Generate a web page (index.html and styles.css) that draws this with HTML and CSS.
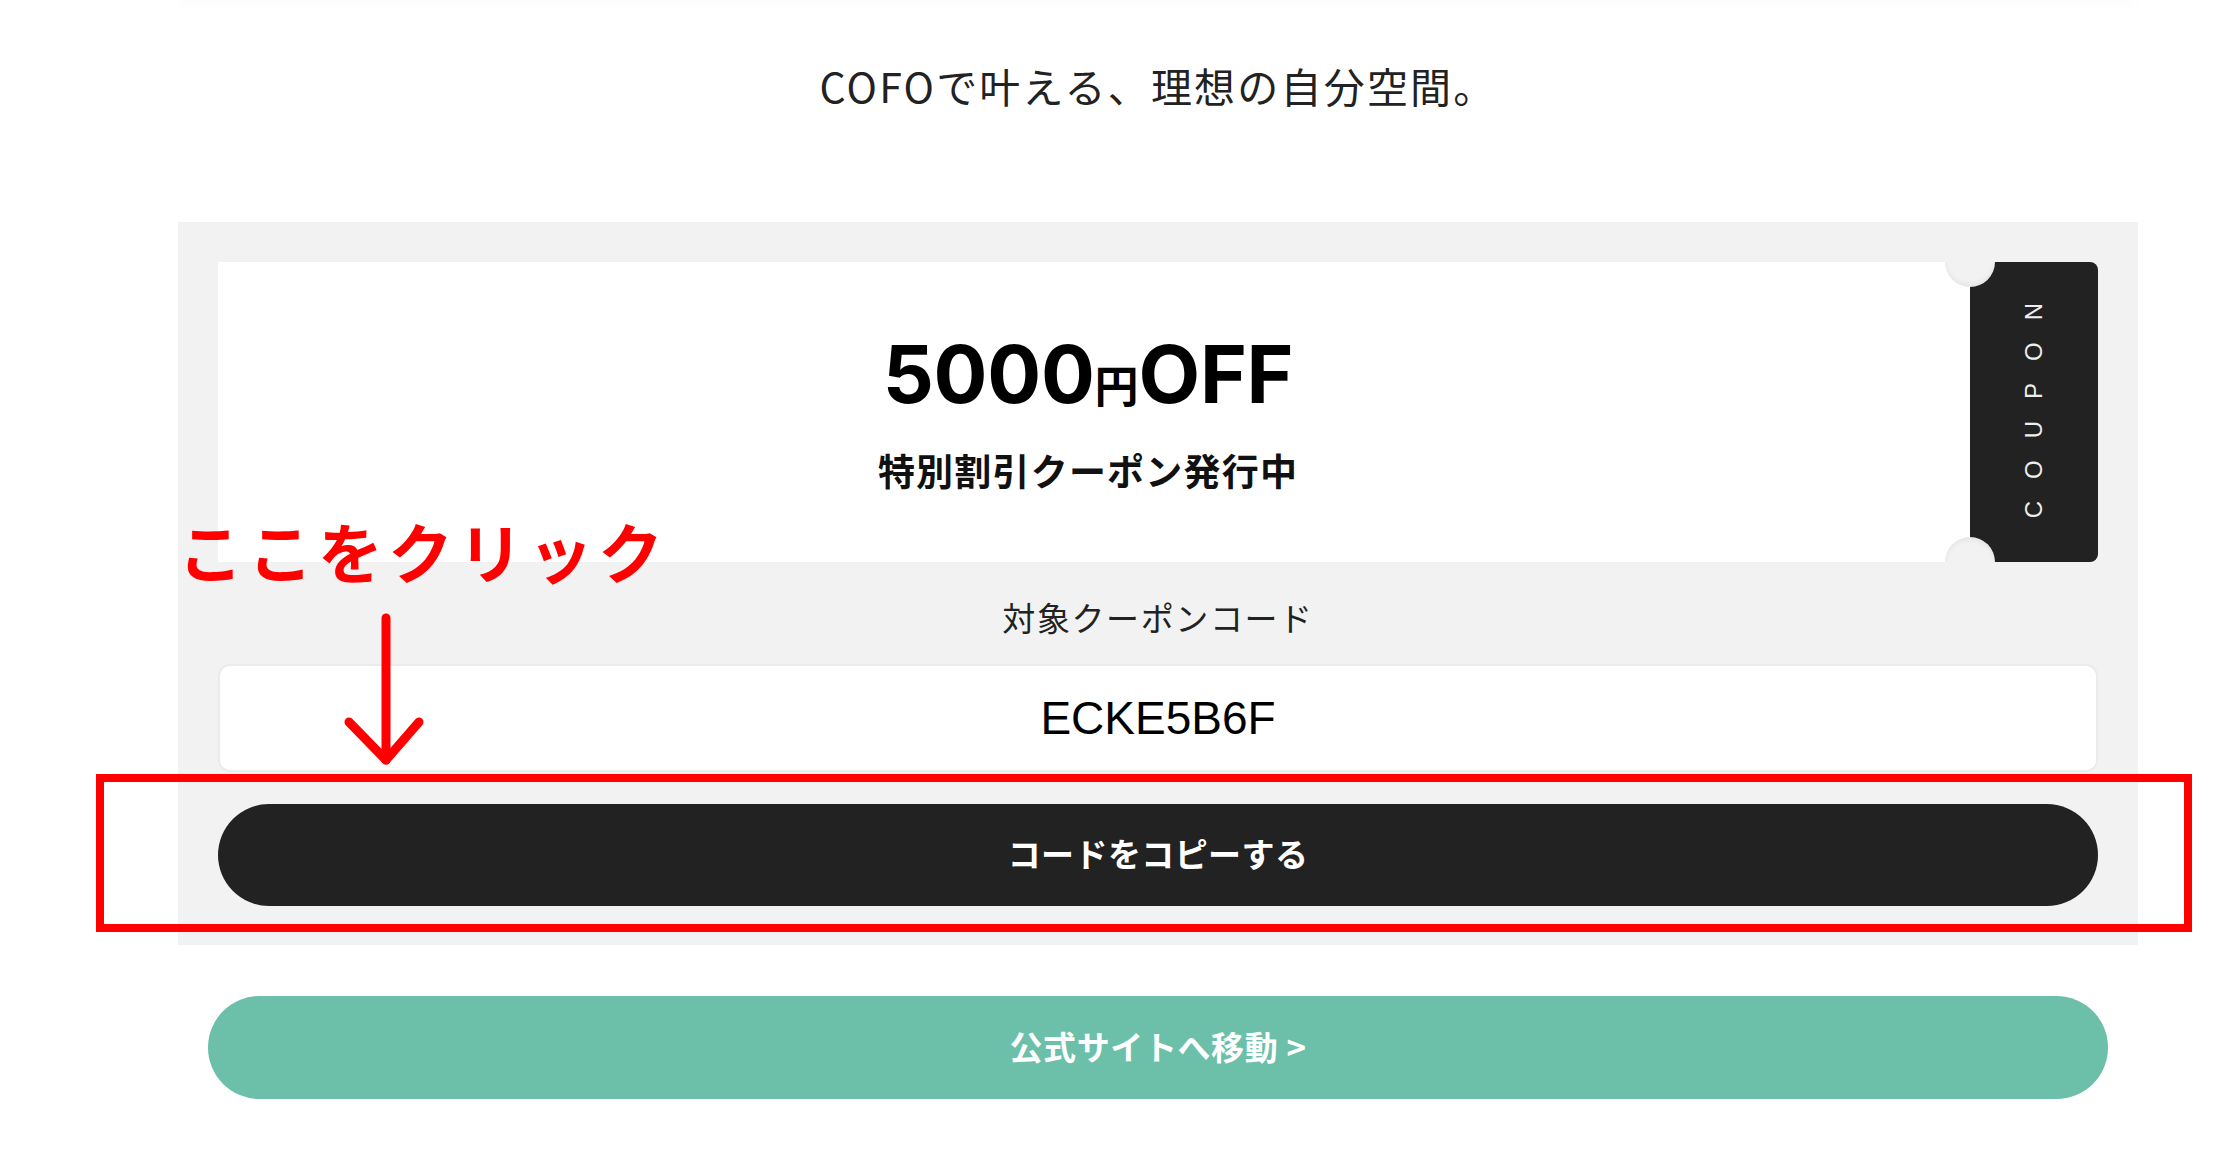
FILE: index.html
```html
<!DOCTYPE html>
<html lang="ja">
<head>
<meta charset="utf-8">
<title>COFO クーポン</title>
<link rel="stylesheet" href="styles.css">
</head>
<body>
  <div class="page">
    <div class="prev-card"></div>
    <h2 class="lead">COFOで叶える、理想の自分空間。</h2>
    <section class="coupon-box">
      <div class="ticket">
        <div class="ticket-main">
          <p class="amount">5000<span class="yen">円</span>OFF</p>
          <p class="sub">特別割引クーポン発行中</p>
        </div>
        <div class="ticket-stub"><span class="stub-text">COUPON</span></div>
        <span class="notch notch-top"></span>
        <span class="notch notch-bottom"></span>
      </div>
      <p class="code-label">対象クーポンコード</p>
      <div class="code-box">ECKE5B6F</div>
      <button class="copy-btn" type="button">コードをコピーする</button>
    </section>
    <a class="site-btn" href="#">公式サイトへ移動 &gt;</a>
  </div>

  <div class="annot-text">ここをクリック</div>
  <svg class="annot-arrow" width="90" height="160" viewBox="0 0 90 160" fill="none" stroke="#ff0000" stroke-width="9" stroke-linecap="round" stroke-linejoin="round">
    <path d="M46 8 L46 150"/>
    <path d="M9 112 L46 150 L79 112"/>
  </svg>
  <div class="annot-frame"></div>
</body>
</html>
```

FILE: styles.css
```css
html, body {
  margin: 0;
  padding: 0;
  background: #ffffff;
}

body {
  font-family: "Noto Sans CJK JP", "Noto Sans", sans-serif;
  color: #222222;
  position: relative;
  min-height: 1166px;
  overflow: hidden;
}

.page {
  margin-left: 178px;
  width: 1960px;
}

.prev-card {
  height: 2px;
  margin-top: -2px;
  background: #fafafa;
  box-shadow: 0 3px 10px rgba(0, 0, 0, 0.05);
}

.lead {
  margin: 55px 0 107px;
  font-size: 41px;
  line-height: 60px;
  font-weight: 400;
  text-align: center;
  color: #222222;
  letter-spacing: 2.2px;
}

.coupon-box {
  background: #f2f2f2;
  padding: 40px 40px 39px;
}

.ticket {
  position: relative;
  display: flex;
  height: 300px;
  overflow: hidden;
}

.ticket-main {
  flex: 1;
  background: #ffffff;
  display: flex;
  flex-direction: column;
  align-items: center;
  justify-content: center;
  padding-top: 4px;
  padding-right: 12px;
}

.amount {
  margin: 0;
  font-family: Inter, "Liberation Sans", sans-serif;
  font-weight: 700;
  font-size: 80px;
  line-height: 80px;
  color: #000000;
  letter-spacing: -0.3px;
}

.yen {
  font-family: "Noto Sans CJK JP", sans-serif;
  font-size: 44px;
  font-weight: 700;
  letter-spacing: 0;
}

.sub {
  margin: 22px 0 0;
  font-size: 37px;
  line-height: 48px;
  font-weight: 700;
  color: #111111;
  letter-spacing: 1.2px;
}

.ticket-stub {
  width: 128px;
  background: #222222;
  border-radius: 0 8px 8px 0;
  display: flex;
  align-items: center;
  justify-content: center;
  padding-bottom: 24px;
  box-sizing: border-box;
}

.stub-text {
  writing-mode: vertical-rl;
  transform: rotate(180deg);
  font-family: "Liberation Sans", Arial, sans-serif;
  font-size: 24px;
  letter-spacing: 22px;
  color: #eeeeee;
}

.notch {
  position: absolute;
  left: 1727px;
  width: 50px;
  height: 50px;
  border-radius: 50%;
  background: #f2f2f2;
}

.notch-top {
  top: -25px;
  box-shadow: inset 0 -3px 5px rgba(0, 0, 0, 0.05);
}

.notch-bottom {
  bottom: -25px;
  box-shadow: inset 0 3px 5px rgba(0, 0, 0, 0.05);
}

.code-label {
  margin: 31px 0 23px;
  font-size: 33px;
  line-height: 48px;
  font-weight: 400;
  text-align: center;
  color: #222222;
  letter-spacing: 1.6px;
}

.code-box {
  height: 108px;
  box-sizing: border-box;
  background: #ffffff;
  border: 2px solid #ebebeb;
  border-radius: 12px;
  display: flex;
  align-items: center;
  justify-content: center;
  font-family: "Liberation Sans", Arial, sans-serif;
  font-size: 46px;
  color: #000000;
}

.copy-btn {
  display: flex;
  align-items: center;
  justify-content: center;
  width: 100%;
  height: 102px;
  margin-top: 32px;
  border: none;
  border-radius: 51px;
  background: #222222;
  color: #ffffff;
  font-family: "Noto Sans CJK JP", sans-serif;
  font-size: 33px;
  font-weight: 700;
  padding: 0 0 5px;
  letter-spacing: 0.4px;
}

.site-btn {
  display: flex;
  align-items: center;
  justify-content: center;
  height: 103px;
  box-sizing: border-box;
  padding-bottom: 4px;
  margin: 51px 30px 0;
  border-radius: 52px;
  background: #6cbfa8;
  color: #ffffff;
  font-size: 33px;
  font-weight: 700;
  text-decoration: none;
  letter-spacing: 0.6px;
}

.annot-text {
  position: absolute;
  left: 178px;
  top: 518px;
  font-size: 65px;
  line-height: 1;
  font-weight: 700;
  letter-spacing: 5px;
  color: #ff0000;
  white-space: nowrap;
}

.annot-arrow {
  position: absolute;
  left: 340px;
  top: 610px;
}

.annot-frame {
  position: absolute;
  left: 96px;
  top: 774px;
  width: 2096px;
  height: 158px;
  box-sizing: border-box;
  border: 8px solid #ff0000;
}
```
